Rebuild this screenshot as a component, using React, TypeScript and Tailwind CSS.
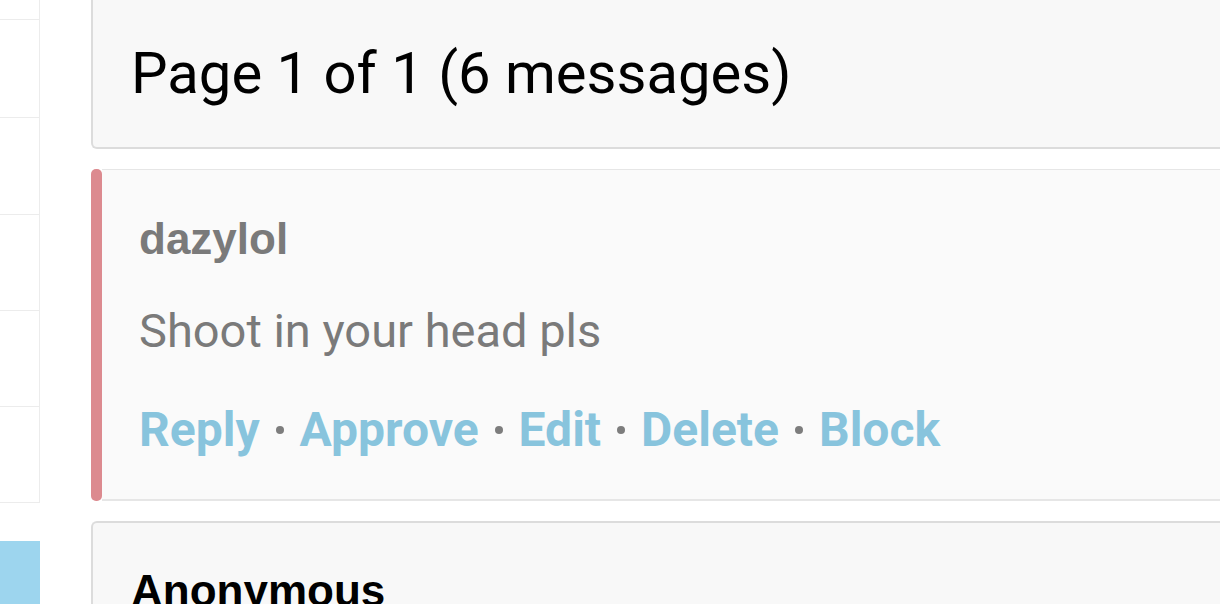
import React from "react";

const sideRows = [
  "h-[20px]",
  "h-[98px]",
  "h-[97px]",
  "h-[96px]",
  "h-[96px]",
  "h-[96px]",
];

const actions = ["Reply", "Approve", "Edit", "Delete", "Block"];

export default function App() {
  return (
    <div className="flex w-[1220px] h-[604px] overflow-hidden bg-white">
      {/* left rail */}
      <aside className="w-[40px] shrink-0 flex flex-col">
        <div className="border-r border-[#ececec] bg-white">
          {sideRows.map((h, i) => (
            <div key={i} className={`${h} border-b border-[#ececec]`} />
          ))}
        </div>
        <div className="mt-[38px] h-[63px] bg-[#9dd5ee]" />
      </aside>

      {/* messages */}
      <main className="flex flex-col gap-[20px] pl-[51px] w-[1240px] shrink-0">
        <div className="h-[149px] shrink-0 bg-[#f8f8f8] border-l-2 border-b-2 border-[#dcdcdc] rounded-bl-[6px] pl-[38px] pt-[44px]">
          <h1 className="font-['Roboto',sans-serif] text-[58px] leading-none text-black">
            Page 1 of 1 (6 messages)
          </h1>
        </div>

        <div className="flex h-[332px] shrink-0">
          <div className="w-[11px] shrink-0 rounded-[5px] bg-[#dc8a8f]" />
          <div className="flex-1 bg-[#fafafa] border-t border-b-2 border-[#e6e6e6] pl-[37px] pt-[47px]">
            <div className="font-['Liberation_Sans',Arial,sans-serif] font-bold text-[44px] leading-none text-[#7a7a7a]">
              dazylol
            </div>
            <p className="mt-[46px] font-['Roboto',sans-serif] text-[47px] leading-none text-[#7a7a7a]">
              Shoot in your head pls
            </p>
            <div className="mt-[52px] flex items-center font-['Roboto',sans-serif] font-bold text-[48px] leading-none text-[#88c4dd]">
              {actions.map((a, i) => (
                <React.Fragment key={a}>
                  {i > 0 && (
                    <span className="mx-[16px] inline-block w-[8px] h-[8px] rounded-full bg-[#7d7d7d]" />
                  )}
                  <span>{a}</span>
                </React.Fragment>
              ))}
            </div>
          </div>
        </div>

        <div className="h-[200px] shrink-0 bg-[#f8f8f8] border-l-2 border-t-2 border-[#dcdcdc] rounded-tl-[6px] pl-[38px] pt-[46px]">
          <div className="font-['Liberation_Sans',Arial,sans-serif] font-bold text-[44px] leading-none text-black">
            Anonymous
          </div>
        </div>
      </main>
    </div>
  );
}
